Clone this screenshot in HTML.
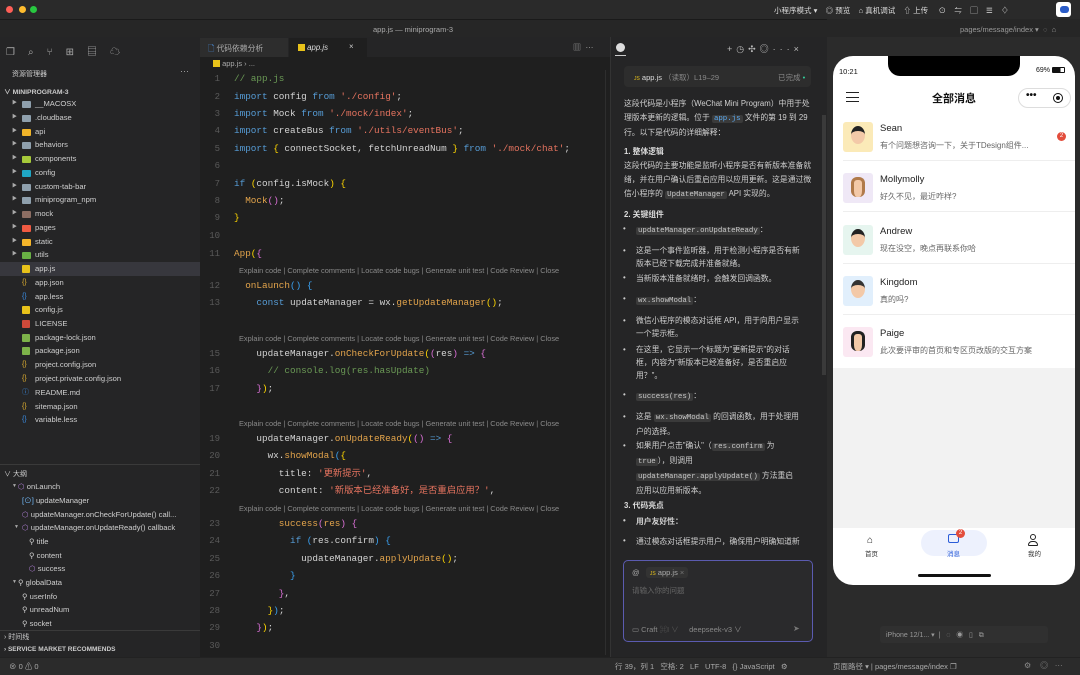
<!DOCTYPE html>
<html><head><meta charset="utf-8">
<style>
*{margin:0;padding:0;box-sizing:border-box}
body{width:1080px;height:675px;overflow:hidden;background:#1f1f1f;font-family:"Liberation Sans","Noto Sans CJK SC",sans-serif;color:#ccc;position:relative}
.a{position:absolute;white-space:nowrap}
.code{position:absolute;left:234px;font-family:"Liberation Mono","Noto Sans CJK SC",monospace;font-size:9.33px;color:#d4d4d4;white-space:pre;line-height:12px}
.ln{position:absolute;left:200px;width:20px;text-align:right;font-family:"Liberation Mono",monospace;font-size:9px;color:#5a5a5a;line-height:12px}
.lens{position:absolute;left:239px;font-size:7.4px;color:#8a8a8a;white-space:nowrap}
.k{color:#569cd6}.s{color:#e5735f}.c{color:#6a9955}.f{color:#e3a44b}.y{color:#ffd700}.p{color:#da70d6}.b{color:#3aa0f0}
.fr{position:absolute;left:0;width:200px;height:13.7px;font-size:7.6px;color:#cfcfcf;line-height:13.7px;white-space:nowrap}
.fr .ar{position:absolute;left:12px;font-size:5px;color:#aaa}
.fr .ic{position:absolute;left:22px;top:3.5px;width:9px;height:7px;border-radius:1px}
.fr .t{position:absolute;left:35px}
.ct{font-size:7.8px;color:#d0d0d0;line-height:14px}
.cd{font-family:"Liberation Mono",monospace;background:#3a3a3a;color:#c8c8c8;padding:0 2px;border-radius:2px;font-size:7.4px}
.li{position:absolute;left:624px;font-size:7.8px;color:#d0d0d0;white-space:nowrap}
.li:before{content:"•";position:absolute;left:-1px;color:#ccc}
.li span.x{position:relative;left:12px}
.msg{position:absolute;left:833px;width:242px;height:51px}
.msg .av{position:absolute;left:10px;top:12px;width:30px;height:30px;border-radius:3px}
.msg .nm{position:absolute;left:47px;top:13px;font-size:9.5px;color:#222}
.msg .tx{position:absolute;left:47px;top:30px;font-size:8px;color:#666;white-space:nowrap}
.msg .ln2{position:absolute;left:10px;right:0;bottom:0;height:1px;background:#eee}
</style></head><body>

<div class="a" style="left:0;top:0;width:1080px;height:19px;background:#2a2a2a"></div>
<div class="a" style="left:6px;top:6px;width:7px;height:7px;border-radius:50%;background:#fe5f57"></div>
<div class="a" style="left:19px;top:6px;width:7px;height:7px;border-radius:50%;background:#febc2e"></div>
<div class="a" style="left:30px;top:6px;width:7px;height:7px;border-radius:50%;background:#28c840"></div>
<div class="a" style="left:774px;top:5px;font-size:7.5px;color:#ddd">小程序模式 ▾ &nbsp;&nbsp;&nbsp;◎ 预览 &nbsp;&nbsp;&nbsp;⌂ 真机调试 &nbsp;&nbsp;&nbsp;⇧ 上传 &nbsp;&nbsp;&nbsp; ⊙ &nbsp;&nbsp; ⇋ &nbsp;&nbsp; ▢ &nbsp;&nbsp; ☰ &nbsp;&nbsp; ♢</div>
<div class="a" style="left:1056px;top:2px;width:15px;height:15px;background:#fff;border-radius:3px"></div>
<div class="a" style="left:1060px;top:6px;width:9px;height:7px;background:#2a5cc8;border-radius:3px"></div>
<div class="a" style="left:0;top:19px;width:1080px;height:18px;background:#262626;border-top:1px solid #1a1a1a"></div>
<div class="a" style="left:0;top:25px;width:826px;text-align:center;font-size:7.5px;color:#aaa">app.js — miniprogram-3</div>

<div class="a" style="left:0;top:37px;width:200px;height:620px;background:#252526"></div>
<div class="a" style="left:6px;top:43px;font-size:10px;color:#aaa;letter-spacing:13px">❐⌕⑂⊞▤☁</div>
<div class="a" style="left:12px;top:69px;font-size:7px;color:#ccc">资源管理器</div>
<div class="a" style="left:180px;top:66px;font-size:9px;color:#aaa">···</div>
<div class="a" style="left:4px;top:86px;font-size:6.8px;color:#ccc;font-weight:bold">∨ MINIPROGRAM-3</div>
<div class="fr" style="top:97px"><span class="ar">▶</span><span class="ic" style="background:#8fa0ad"></span><span class="t">__MACOSX</span></div>
<div class="fr" style="top:111px"><span class="ar">▶</span><span class="ic" style="background:#8fa0ad"></span><span class="t">.cloudbase</span></div>
<div class="fr" style="top:125px"><span class="ar">▶</span><span class="ic" style="background:#f0b429"></span><span class="t">api</span></div>
<div class="fr" style="top:138px"><span class="ar">▶</span><span class="ic" style="background:#8fa0ad"></span><span class="t">behaviors</span></div>
<div class="fr" style="top:152px"><span class="ar">▶</span><span class="ic" style="background:#a6c93a"></span><span class="t">components</span></div>
<div class="fr" style="top:166px"><span class="ar">▶</span><span class="ic" style="background:#1fa6c4"></span><span class="t">config</span></div>
<div class="fr" style="top:180px"><span class="ar">▶</span><span class="ic" style="background:#8fa0ad"></span><span class="t">custom-tab-bar</span></div>
<div class="fr" style="top:193px"><span class="ar">▶</span><span class="ic" style="background:#8fa0ad"></span><span class="t">miniprogram_npm</span></div>
<div class="fr" style="top:207px"><span class="ar">▶</span><span class="ic" style="background:#8d6e63"></span><span class="t">mock</span></div>
<div class="fr" style="top:221px"><span class="ar">▶</span><span class="ic" style="background:#ef5a42"></span><span class="t">pages</span></div>
<div class="fr" style="top:235px"><span class="ar">▶</span><span class="ic" style="background:#f5b52a"></span><span class="t">static</span></div>
<div class="fr" style="top:248px"><span class="ar">▶</span><span class="ic" style="background:#69b044"></span><span class="t">utils</span></div>
<div class="fr" style="top:262px;background:#37373d"><span class="ic" style="background:#e8c21a;width:8px;height:8px;top:3px"></span><span class="t">app.js</span></div>
<div class="fr" style="top:276px"><span class="ic" style="color:#e0b030;font-size:7px;top:0;background:none">{}</span><span class="t">app.json</span></div>
<div class="fr" style="top:290px"><span class="ic" style="color:#3a8ee6;font-size:7px;top:0;background:none">{}</span><span class="t">app.less</span></div>
<div class="fr" style="top:303px"><span class="ic" style="background:#e8c21a;width:8px;height:8px;top:3px"></span><span class="t">config.js</span></div>
<div class="fr" style="top:317px"><span class="ic" style="background:#d04a3a;width:8px;height:8px;top:3px"></span><span class="t">LICENSE</span></div>
<div class="fr" style="top:331px"><span class="ic" style="background:#7db34a;width:8px;height:8px;top:3px"></span><span class="t">package-lock.json</span></div>
<div class="fr" style="top:344px"><span class="ic" style="background:#7db34a;width:8px;height:8px;top:3px"></span><span class="t">package.json</span></div>
<div class="fr" style="top:358px"><span class="ic" style="color:#e0b030;font-size:7px;top:0;background:none">{}</span><span class="t">project.config.json</span></div>
<div class="fr" style="top:372px"><span class="ic" style="color:#e0b030;font-size:7px;top:0;background:none">{}</span><span class="t">project.private.config.json</span></div>
<div class="fr" style="top:386px"><span class="ic" style="color:#3a8ee6;font-size:7px;top:0;background:none">ⓘ</span><span class="t">README.md</span></div>
<div class="fr" style="top:400px"><span class="ic" style="color:#e0b030;font-size:7px;top:0;background:none">{}</span><span class="t">sitemap.json</span></div>
<div class="fr" style="top:413px"><span class="ic" style="color:#3a8ee6;font-size:7px;top:0;background:none">{}</span><span class="t">variable.less</span></div>

<div class="a" style="left:0;top:464px;width:200px;height:1px;background:#3a3a3a"></div>
<div class="a" style="left:4px;top:469px;font-size:7px;color:#ccc">∨ 大纲</div>
<div class="fr" style="top:480px"><span class="ar">▼</span><span class="t" style="left:18px"><span style="color:#b180d7">⬡</span> onLaunch</span></div>
<div class="fr" style="top:494px"><span class="t" style="left:22px"><span style="color:#75beff">[⊙]</span> updateManager</span></div>
<div class="fr" style="top:508px"><span class="t" style="left:22px"><span style="color:#b180d7">⬡</span> updateManager.onCheckForUpdate() call...</span></div>
<div class="fr" style="top:521px"><span class="ar" style="left:14px">▼</span><span class="t" style="left:22px"><span style="color:#b180d7">⬡</span> updateManager.onUpdateReady() callback</span></div>
<div class="fr" style="top:535px"><span class="t" style="left:29px">⚲ title</span></div>
<div class="fr" style="top:549px"><span class="t" style="left:29px">⚲ content</span></div>
<div class="fr" style="top:562px"><span class="t" style="left:29px"><span style="color:#b180d7">⬡</span> success</span></div>
<div class="fr" style="top:576px"><span class="ar">▼</span><span class="t" style="left:18px">⚲ globalData</span></div>
<div class="fr" style="top:590px"><span class="t" style="left:22px">⚲ userInfo</span></div>
<div class="fr" style="top:603px"><span class="t" style="left:22px">⚲ unreadNum</span></div>
<div class="fr" style="top:617px"><span class="t" style="left:22px">⚲ socket</span></div>
<div class="a" style="left:0;top:630px;width:200px;height:1px;background:#3a3a3a"></div>
<div class="a" style="left:4px;top:632px;font-size:7px;color:#ccc">› 时间线</div>
<div class="a" style="left:4px;top:646px;font-size:6.5px;color:#ccc;font-weight:bold">› SERVICE MARKET RECOMMENDS</div>

<div class="a" style="left:200px;top:37px;width:410px;height:20px;background:#252526"></div>
<div class="a" style="left:200px;top:38px;width:88px;height:19px;background:#2d2d2d;font-size:7.8px;color:#aaa;padding:5px 0 0 8px"><span style="color:#4a8fe0">🗋</span> 代码依赖分析</div>
<div class="a" style="left:289px;top:38px;width:78px;height:19px;background:#1f1f1f;font-size:7.8px;color:#ddd;padding:5px 0 0 9px"><span style="display:inline-block;width:7px;height:7px;background:#e8c21a;vertical-align:-1px"></span> <i>app.js</i><span style="position:absolute;left:60px;top:4px;color:#ccc">×</span></div>
<div class="a" style="left:573px;top:42px;font-size:8px;color:#aaa">▥ &nbsp;···</div>
<div class="a" style="left:213px;top:59px;font-size:7.5px;color:#aaa"><span style="display:inline-block;width:7px;height:7px;background:#e8c21a;vertical-align:-1px"></span> app.js › ...</div>
<div class="a" style="left:605px;top:70px;width:1px;height:585px;background:#2e2e2e"></div>

<div class="ln" style="top:73px">1</div><div class="code" style="top:73px"><span class="c">// app.js</span></div>
<div class="ln" style="top:91px">2</div><div class="code" style="top:91px"><span class="k">import</span> config <span class="k">from</span> <span class="s">'./config'</span>;</div>
<div class="ln" style="top:108px">3</div><div class="code" style="top:108px"><span class="k">import</span> Mock <span class="k">from</span> <span class="s">'./mock/index'</span>;</div>
<div class="ln" style="top:125px">4</div><div class="code" style="top:125px"><span class="k">import</span> createBus <span class="k">from</span> <span class="s">'./utils/eventBus'</span>;</div>
<div class="ln" style="top:143px">5</div><div class="code" style="top:143px"><span class="k">import</span> <span class="y">{</span> connectSocket, fetchUnreadNum <span class="y">}</span> <span class="k">from</span> <span class="s">'./mock/chat'</span>;</div>
<div class="ln" style="top:160px">6</div>
<div class="ln" style="top:178px">7</div><div class="code" style="top:178px"><span class="k">if</span> <span class="y">(</span>config.isMock<span class="y">)</span> <span class="y">{</span></div>
<div class="ln" style="top:195px">8</div><div class="code" style="top:195px">  <span class="f">Mock</span><span class="p">()</span>;</div>
<div class="ln" style="top:212px">9</div><div class="code" style="top:212px"><span class="y">}</span></div>
<div class="ln" style="top:230px">10</div>
<div class="ln" style="top:248px">11</div><div class="code" style="top:248px"><span class="f">App</span><span class="y">(</span><span class="p">{</span></div>
<div class="lens" style="top:266px">Explain code | Complete comments | Locate code bugs | Generate unit test | Code Review | Close</div>
<div class="ln" style="top:280px">12</div><div class="code" style="top:280px">  <span class="f">onLaunch</span><span class="b">()</span> <span class="b">{</span></div>
<div class="ln" style="top:297px">13</div><div class="code" style="top:297px">    <span class="k">const</span> updateManager = wx.<span class="f">getUpdateManager</span><span class="y">()</span>;</div>
<div class="lens" style="top:334px">Explain code | Complete comments | Locate code bugs | Generate unit test | Code Review | Close</div>
<div class="ln" style="top:348px">15</div><div class="code" style="top:348px">    updateManager.<span class="f">onCheckForUpdate</span><span class="y">(</span><span class="p">(</span>res<span class="p">)</span> <span class="k">=&gt;</span> <span class="p">{</span></div>
<div class="ln" style="top:365px">16</div><div class="code" style="top:365px">      <span class="c">// console.log(res.hasUpdate)</span></div>
<div class="ln" style="top:383px">17</div><div class="code" style="top:383px">    <span class="p">}</span><span class="y">)</span>;</div>
<div class="lens" style="top:419px">Explain code | Complete comments | Locate code bugs | Generate unit test | Code Review | Close</div>
<div class="ln" style="top:433px">19</div><div class="code" style="top:433px">    updateManager.<span class="f">onUpdateReady</span><span class="y">(</span><span class="p">()</span> <span class="k">=&gt;</span> <span class="p">{</span></div>
<div class="ln" style="top:450px">20</div><div class="code" style="top:450px">      wx.<span class="f">showModal</span><span class="b">(</span><span class="y">{</span></div>
<div class="ln" style="top:468px">21</div><div class="code" style="top:468px">        title: <span class="s">'更新提示'</span>,</div>
<div class="ln" style="top:485px">22</div><div class="code" style="top:485px">        content: <span class="s">'新版本已经准备好，是否重启应用？'</span>,</div>
<div class="lens" style="top:504px">Explain code | Complete comments | Locate code bugs | Generate unit test | Code Review | Close</div>
<div class="ln" style="top:518px">23</div><div class="code" style="top:518px">        <span class="f">success</span><span class="p">(</span><span class="f">res</span><span class="p">)</span> <span class="p">{</span></div>
<div class="ln" style="top:535px">24</div><div class="code" style="top:535px">          <span class="k">if</span> <span class="b">(</span>res.confirm<span class="b">)</span> <span class="b">{</span></div>
<div class="ln" style="top:553px">25</div><div class="code" style="top:553px">            updateManager.<span class="f">applyUpdate</span><span class="y">()</span>;</div>
<div class="ln" style="top:570px">26</div><div class="code" style="top:570px">          <span class="b">}</span></div>
<div class="ln" style="top:588px">27</div><div class="code" style="top:588px">        <span class="p">}</span>,</div>
<div class="ln" style="top:605px">28</div><div class="code" style="top:605px">      <span class="y">}</span><span class="b">)</span>;</div>
<div class="ln" style="top:622px">29</div><div class="code" style="top:622px">    <span class="p">}</span><span class="y">)</span>;</div>
<div class="ln" style="top:640px">30</div>

<div class="a" style="left:610px;top:37px;width:217px;height:620px;background:#252526;border-left:1px solid #333"></div>
<div class="a" style="left:616px;top:43px;width:9px;height:9px;border-radius:50%;background:#ddd"></div>
<div class="a" style="left:615px;top:55px;width:11px;height:1px;background:#ccc"></div>
<div class="a" style="left:727px;top:42px;font-size:9px;color:#bbb;letter-spacing:4px">+◷✣◎···×</div>
<div class="a" style="left:624px;top:66px;width:187px;height:21px;background:#2d2d2d;border-radius:4px"></div>
<div class="a" style="left:634px;top:72px;font-size:7.5px;color:#ddd"><span style="color:#e8c21a;font-size:5px">JS</span> app.js <span style="color:#888">（读取）L19–29</span></div>
<div class="a" style="left:778px;top:72px;font-size:7.5px;color:#888">已完成 <span style="color:#3c9">•</span></div>
<div class="a ct" style="left:624px;top:97px;white-space:normal;width:190px">这段代码是小程序（WeChat Mini Program）中用于处理版本更新的逻辑。位于 <span class="cd" style="color:#5aa9f0">app.js</span> 文件的第 19 到 29 行。以下是代码的详细解释：</div>
<div class="a" style="left:624px;top:146px;font-size:7.8px;color:#ddd;font-weight:bold">1. 整体逻辑</div>
<div class="a ct" style="left:624px;top:159px;white-space:normal;width:190px">这段代码的主要功能是监听小程序是否有新版本准备就绪，并在用户确认后重启应用以应用更新。这是通过微信小程序的 <span class="cd">UpdateManager</span> API 实现的。</div>
<div class="a" style="left:624px;top:209px;font-size:7.8px;color:#ddd;font-weight:bold">2. 关键组件</div>
<div class="li" style="top:224px"><span class="x"><span class="cd">updateManager.onUpdateReady</span>：</span></div>
<div class="li" style="top:244px;line-height:13px"><span class="x">这是一个事件监听器，用于检测小程序是否有新<br>版本已经下载完成并准备就绪。</span></div>
<div class="li" style="top:273px"><span class="x">当新版本准备就绪时，会触发回调函数。</span></div>
<div class="li" style="top:294px"><span class="x"><span class="cd">wx.showModal</span>：</span></div>
<div class="li" style="top:314px;line-height:13px"><span class="x">微信小程序的模态对话框 API，用于向用户显示<br>一个提示框。</span></div>
<div class="li" style="top:343px;line-height:13px"><span class="x">在这里，它显示一个标题为"更新提示"的对话<br>框，内容为"新版本已经准备好，是否重启应<br>用？"。</span></div>
<div class="li" style="top:390px"><span class="x"><span class="cd">success(res)</span>：</span></div>
<div class="li" style="top:410px;line-height:13px"><span class="x">这是 <span class="cd">wx.showModal</span> 的回调函数，用于处理用<br>户的选择。</span></div>
<div class="li" style="top:439px;line-height:13px"><span class="x">如果用户点击"确认"（<span class="cd">res.confirm</span> 为<br><span class="cd">true</span>），则调用<br><span class="cd">updateManager.applyUpdate()</span> 方法重启<br>应用以应用新版本。</span></div>
<div class="a" style="left:624px;top:500px;font-size:7.8px;color:#ddd;font-weight:bold">3. 代码亮点</div>
<div class="li" style="top:516px;font-weight:bold"><span class="x">用户友好性：</span></div>
<div class="li" style="top:536px"><span class="x">通过模态对话框提示用户，确保用户明确知道新</span></div>
<div class="a" style="left:822px;top:115px;width:4px;height:260px;background:#3a3a3a"></div>
<div class="a" style="left:623px;top:560px;width:190px;height:82px;background:#2a2a2c;border:1px solid #5b5bb0;border-radius:5px"></div>
<div class="a" style="left:632px;top:568px;font-size:7.5px;color:#aaa">@ &nbsp;&nbsp;<span style="background:#333;padding:1px 4px;border-radius:3px"><span style="color:#e8c21a;font-size:5px">JS</span> app.js <span style="color:#777">×</span></span></div>
<div class="a" style="left:632px;top:585px;font-size:7.5px;color:#666">请输入你的问题</div>
<div class="a" style="left:632px;top:624px;font-size:7.5px;color:#888">▭ Craft <span style="color:#555">⌘I ∨</span> &nbsp;&nbsp;&nbsp; deepseek-v3 ∨</div>
<div class="a" style="left:793px;top:624px;font-size:8px;color:#777">➤</div>

<div class="a" style="left:827px;top:37px;width:253px;height:620px;background:#2b2b2b"></div>
<div class="a" style="left:827px;top:19px;width:253px;height:18px;background:#262626"></div>
<div class="a" style="left:960px;top:25px;font-size:7.5px;color:#999">pages/message/index ▾ &nbsp;◌ &nbsp;⌂</div>
<div class="a" style="left:833px;top:56px;width:242px;height:529px;background:#fff;border-radius:20px;overflow:hidden">
  <div class="a" style="left:55px;top:0;width:132px;height:20px;background:#000;border-radius:0 0 12px 12px"></div>
  <div class="a" style="left:6px;top:11px;font-size:7.5px;color:#111">10:21</div>
  <div class="a" style="left:203px;top:11px;font-size:7px;color:#111">69% <span style="display:inline-block;width:13px;height:6px;border:1px solid #111;border-radius:1px;vertical-align:-1px;background:linear-gradient(90deg,#111 70%,#fff 70%)"></span></div>
  <div class="a" style="left:13px;top:36px;width:13px;height:10px;border-top:1.6px solid #222;border-bottom:1.6px solid #222"></div>
  <div class="a" style="left:13px;top:40.5px;width:13px;height:1.6px;background:#222"></div>
  <div class="a" style="left:0;top:34px;width:242px;text-align:center;font-size:11px;font-weight:bold;color:#111">全部消息</div>
  <div class="a" style="left:185px;top:32px;width:53px;height:20px;border:1px solid #ddd;border-radius:10px"></div>
  <div class="a" style="left:193px;top:34px;font-size:10px;font-weight:bold;color:#111">•••</div>
  <div class="a" style="left:220px;top:37px;width:10px;height:10px;border:1.5px solid #111;border-radius:50%"></div>
  <div class="a" style="left:223px;top:40px;width:4px;height:4px;background:#111;border-radius:50%"></div>
  <div class="a" style="left:0;top:312px;width:242px;height:160px;background:#f2f2f2"></div>
  <div class="a" style="left:88px;top:474px;width:66px;height:26px;background:#edf1fd;border-radius:13px"></div>
  <div class="a" style="left:34px;top:479px;font-size:10px;color:#222">⌂</div>
  <div class="a" style="left:32px;top:492px;font-size:6.5px;color:#333">首页</div>
  <div class="a" style="left:115px;top:478px;width:11px;height:9px;border:1.5px solid #2a5cd8;border-radius:2px"></div>
  <div class="a" style="left:123px;top:473px;width:9px;height:9px;background:#e34d3c;border-radius:50%;color:#fff;font-size:6px;text-align:center;line-height:9px">2</div>
  <div class="a" style="left:114px;top:492px;font-size:6.5px;color:#2a5cd8">消息</div>
  <div class="a" style="left:197px;top:478px;width:6px;height:6px;border:1.3px solid #222;border-radius:50%"></div>
  <div class="a" style="left:195px;top:485px;width:10px;height:5px;border:1.3px solid #222;border-radius:4px 4px 1px 1px"></div>
  <div class="a" style="left:195px;top:492px;font-size:6.5px;color:#333">我的</div>
  <div class="a" style="left:85px;top:518px;width:73px;height:3px;background:#111;border-radius:2px"></div>
</div>
<div class="msg" style="top:110px"><div class="av" style="background:#fbeab8"></div><div class="nm">Sean</div><div class="tx">有个问题想咨询一下，关于TDesign组件...</div><div class="a" style="left:224px;top:22px;width:9px;height:9px;border-radius:50%;background:#e34d3c;color:#fff;font-size:6px;text-align:center;line-height:9px">2</div><div class="ln2"></div></div>
<div class="msg" style="top:161px"><div class="av" style="background:#efe8f6"></div><div class="nm">Mollymolly</div><div class="tx">好久不见，最近咋样?</div><div class="ln2"></div></div>
<div class="msg" style="top:213px"><div class="av" style="background:#e6f5ef"></div><div class="nm">Andrew</div><div class="tx">现在没空，晚点再联系你哈</div><div class="ln2"></div></div>
<div class="msg" style="top:264px"><div class="av" style="background:#e1effc"></div><div class="nm">Kingdom</div><div class="tx">真的吗?</div><div class="ln2"></div></div>
<div class="msg" style="top:315px"><div class="av" style="background:#fbe8f2"></div><div class="nm">Paige</div><div class="tx">此次要评审的首页和专区页改版的交互方案</div></div>
<div class="a" style="left:851px;top:126px;width:14px;height:18px;border-radius:50%;background:#f3c9a8;border-top:5px solid #222"></div>
<div class="a" style="left:851px;top:177px;width:14px;height:20px;border-radius:6px;background:#f3c9a8;border:3px solid #b07a4a;border-bottom:none"></div>
<div class="a" style="left:851px;top:229px;width:14px;height:18px;border-radius:50%;background:#f3c9a8;border-top:5px solid #222"></div>
<div class="a" style="left:851px;top:280px;width:14px;height:18px;border-radius:50%;background:#f3c9a8;border-top:5px solid #333"></div>
<div class="a" style="left:851px;top:331px;width:14px;height:20px;border-radius:6px;background:#f3c9a8;border:3px solid #222;border-bottom:none"></div>

<div class="a" style="left:880px;top:626px;width:168px;height:17px;background:#303030;border-radius:3px"></div>
<div class="a" style="left:886px;top:630px;font-size:7px;color:#999">iPhone 12/1... ▾ &nbsp;| &nbsp; ◌ &nbsp; ◉ &nbsp; ▯ &nbsp; ⧉</div>

<div class="a" style="left:0;top:657px;width:1080px;height:18px;background:#2b2b2b;border-top:1px solid #222"></div>
<div class="a" style="left:9px;top:661px;font-size:7.5px;color:#aaa">⊗ 0 ⚠ 0</div>
<div class="a" style="left:615px;top:661px;font-size:7.5px;color:#aaa">行 39，列 1 &nbsp;&nbsp;空格: 2 &nbsp;&nbsp;LF &nbsp;&nbsp;UTF-8 &nbsp;&nbsp;{} JavaScript &nbsp;&nbsp;⚙</div>
<div class="a" style="left:833px;top:661px;font-size:7.5px;color:#aaa">页面路径 ▾ | pages/message/index ❐</div>
<div class="a" style="left:1024px;top:660px;font-size:8px;color:#888">⚙ &nbsp;&nbsp; ◎ &nbsp;&nbsp;···</div>
</body></html>
